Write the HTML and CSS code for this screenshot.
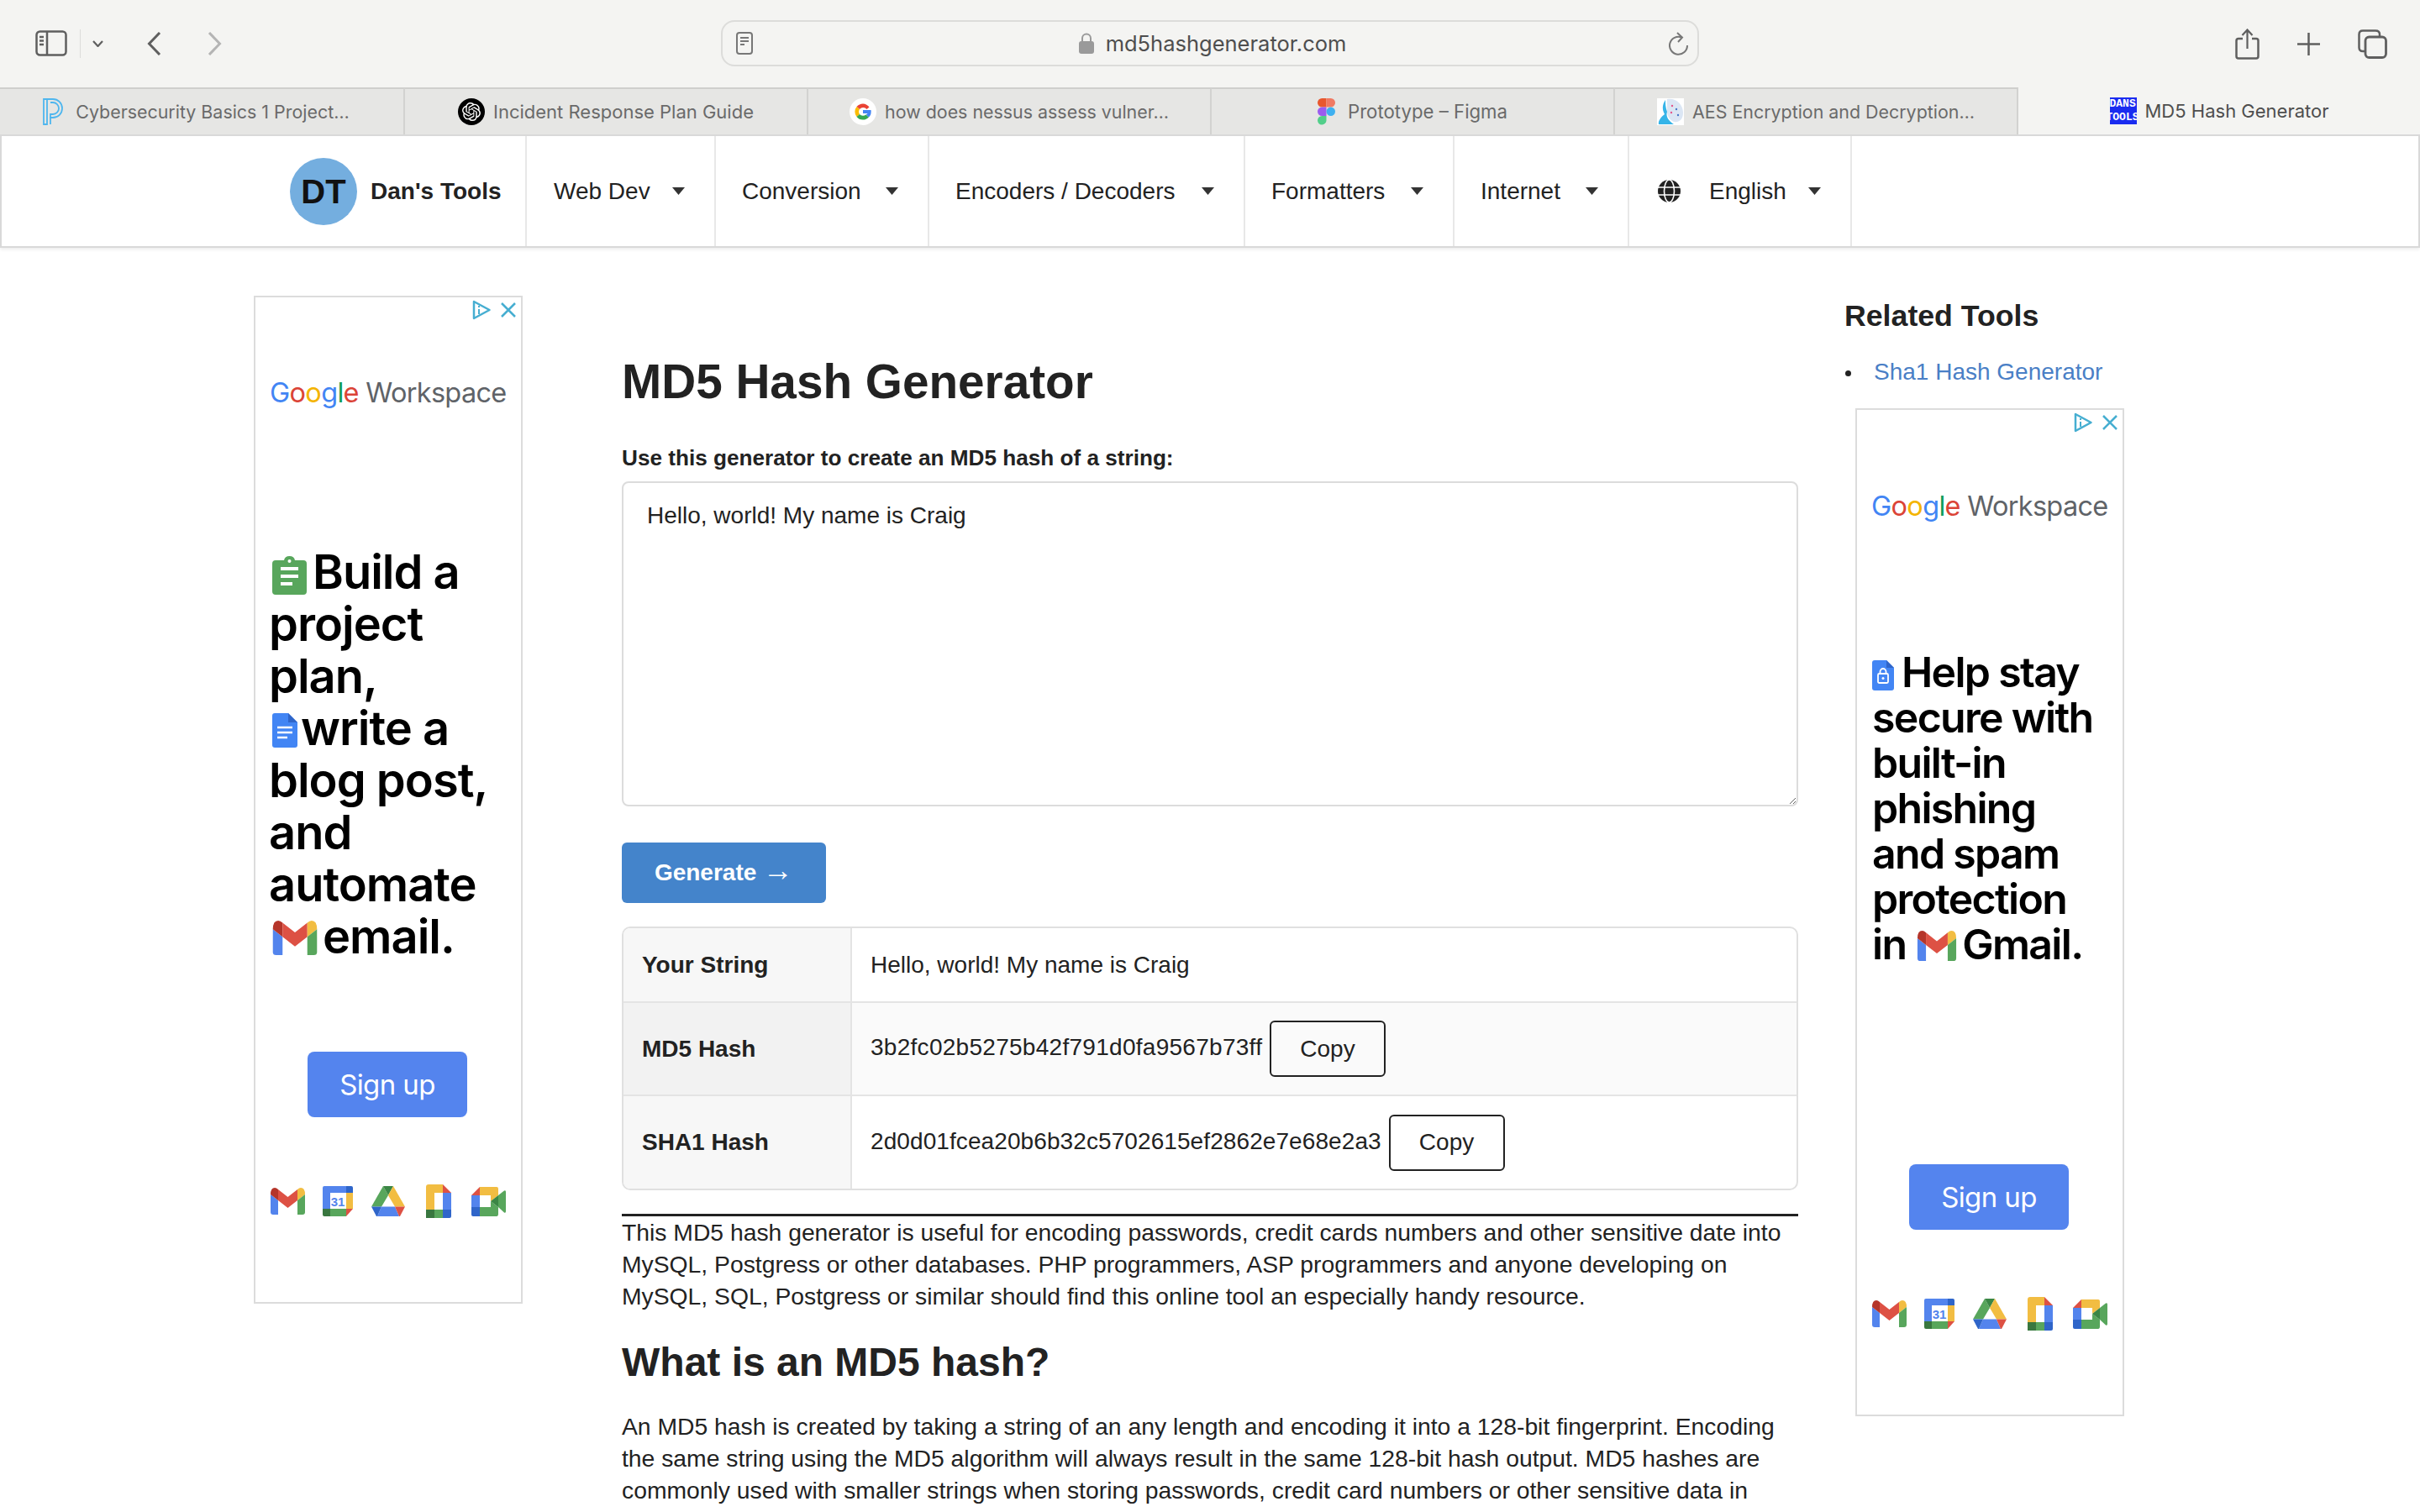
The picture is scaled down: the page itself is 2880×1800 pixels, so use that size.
FILE: index.html
```html
<!DOCTYPE html>
<html lang="en">
<head>
<meta charset="utf-8">
<title>MD5 Hash Generator</title>
<link rel="stylesheet" href="styles.css">
</head>
<body>
<svg class="defs" width="0" height="0" aria-hidden="true">
  <symbol id="i-gmail" viewBox="0 0 41 32">
    <path fill="#5384ed" d="M0 8L9 15V32H3Q0 32 0 29Z"/>
    <path fill="#b5352a" d="M0 8Q0 0 5 0Q7 0 9 2V15Z"/>
    <path fill="#dd5144" d="M9 2L20.5 11L32 2V15L20.5 24L9 15Z"/>
    <path fill="#f2bd42" d="M32 2Q34 0 36 0Q41 0 41 8L32 15Z"/>
    <path fill="#58a65c" d="M41 8V29Q41 32 38 32H32V15Z"/>
  </symbol>
  <symbol id="i-cal" viewBox="0 0 36 36">
    <path fill="#5384ed" d="M2 0H28V8H9V27H0V2Q0 0 2 0Z"/>
    <path fill="#2f65c9" d="M28 0H34Q36 0 36 2V8H28Z"/>
    <path fill="#f2bd42" d="M28 8H36V27H28Z"/>
    <path fill="#39773f" d="M0 27H9V36H2Q0 36 0 34Z"/>
    <path fill="#58a65c" d="M9 27H28V36H9Z"/>
    <path fill="#dd5144" d="M28 27H36L28 36Z"/>
    <text x="18" y="24" text-anchor="middle" class="cal-num">31</text>
  </symbol>
  <symbol id="i-drive" viewBox="0 0 40 36">
    <path fill="#58a65c" d="M14 0L20 11L12 24.500H0Z"/>
    <path fill="#3b8645" d="M14 0H26L20 11Z"/>
    <path fill="#f2bd42" d="M26 0L40 24.500H28L20 11Z"/>
    <path fill="#5384ed" d="M12 24.500H28L33 36H7Z"/>
    <path fill="#2f65c9" d="M0 24.500H12L7 36H6Z"/>
    <path fill="#dd5144" d="M28 24.500H40L34 36H33Z"/>
  </symbol>
  <symbol id="i-docs" viewBox="0 0 30 40">
    <path fill="#f2bd42" d="M3 0H20V10H10V30H0V3Q0 0 3 0Z"/>
    <path fill="#dd5144" d="M20 0L30 10H20Z"/>
    <path fill="#5384ed" d="M20 10H30V30H20Z"/>
    <path fill="#39773f" d="M0 30H10V40H0Z"/>
    <path fill="#58a65c" d="M10 30H20V40H10Z"/>
    <path fill="#2f65c9" d="M20 30H30V38Q30 40 28 40H20Z"/>
  </symbol>
  <symbol id="i-meet" viewBox="0 0 41 35">
    <path fill="#dd5144" d="M0 10L10 0V10Z"/>
    <path fill="#f2bd42" d="M10 0H30Q32 0 32 2V10L23 17V10H10Z"/>
    <path fill="#5384ed" d="M0 10H10V24H0Z"/>
    <path fill="#2f65c9" d="M0 24H10V35H2Q0 35 0 33Z"/>
    <path fill="#58a65c" d="M10 24H23V17L32 24V32Q32 35 30 35H10Z"/>
    <path fill="#3b8645" d="M23 17L32 10V24Z"/>
    <path fill="#58a65c" d="M32 10L39 4.500Q41 3.500 41 6V29Q41 31.500 39 30.500L32 24Z"/>
  </symbol>
  <symbol id="i-adinfo" viewBox="0 0 22 24">
    <path fill="none" stroke="#46aed1" stroke-width="2.500" stroke-linejoin="round" d="M2 2L20.500 12L2 22Z"/>
    <path fill="none" stroke="#46aed1" stroke-width="2" d="M8 11V17M8 7V9"/>
  </symbol>
  <symbol id="i-adclose" viewBox="0 0 18 18">
    <path fill="none" stroke="#46aed1" stroke-width="2.500" d="M1 1L17 17M17 1L1 17"/>
  </symbol>
  <symbol id="i-caret" viewBox="0 0 15 9">
    <path fill="#333" d="M0 0H15L7.500 9Z"/>
  </symbol>
  <symbol id="i-doc-blue" viewBox="0 0 30 41">
    <path fill="#4285f4" d="M3 0H19L30 11V38Q30 41 27 41H3Q0 41 0 38V3Q0 0 3 0Z"/>
    <path fill="#2f65c9" d="M19 0L30 11H19Z"/>
    <path stroke="#fff" stroke-width="2.400" d="M6 17H24M6 23H24M6 29H18"/>
  </symbol>
</svg>

<header class="browser">
  <div class="toolbar">
    <div class="tb-left">
      <svg class="ic-sidebar" width="38" height="31" viewBox="0 0 38 31"><rect x="1.500" y="1.500" width="35" height="28" rx="4" fill="none" stroke="#5f5f5f" stroke-width="2.500"/><path d="M14 1.500V29.500" stroke="#5f5f5f" stroke-width="2.500"/><path d="M5 8H10M5 12.500H10M5 17H10" stroke="#5f5f5f" stroke-width="2.500"/></svg>
      <span class="tb-divider"></span>
      <svg class="ic-chev" width="13" height="8" viewBox="0 0 13 8"><path d="M1 1L6.500 7L12 1" fill="none" stroke="#5f5f5f" stroke-width="2.200"/></svg>
      <svg class="ic-back" width="17" height="28" viewBox="0 0 17 28"><path d="M15 1L2.500 14L15 27" fill="none" stroke="#5f5f5f" stroke-width="3"/></svg>
      <svg class="ic-fwd" width="17" height="28" viewBox="0 0 17 28"><path d="M2 1L14.500 14L2 27" fill="none" stroke="#b4b4b4" stroke-width="3"/></svg>
    </div>
    <div class="address">
      <svg class="ic-page" width="20" height="27" viewBox="0 0 20 27"><rect x="1" y="1" width="18" height="25" rx="3" fill="none" stroke="#777" stroke-width="2"/><path d="M5 7H15M5 11H15M5 15H10" stroke="#777" stroke-width="2"/></svg>
      <span class="url">
        <svg width="18" height="25" viewBox="0 0 18 25"><path d="M4 11V6.500A5 5 0 0 1 14 6.500V11" fill="none" stroke="#9a9a9a" stroke-width="2"/><rect y="10" width="18" height="15" rx="3" fill="#9a9a9a"/></svg>
        <span class="url-text">md5hashgenerator.com</span>
      </span>
      <svg class="ic-reload" width="24" height="28" viewBox="0 0 24 28"><path d="M15.500 6.500A10.500 10.500 0 1 0 22 16" fill="none" stroke="#777" stroke-width="2"/><path d="M10 1L16 6.500L11 12" fill="none" stroke="#777" stroke-width="2"/></svg>
    </div>
    <div class="tb-right">
      <svg width="29" height="37" viewBox="0 0 29 37"><path d="M9 12H4Q1.500 12 1.500 14.500V33Q1.500 35.500 4 35.500H25Q27.500 35.500 27.500 33V14.500Q27.500 12 25 12H20" fill="none" stroke="#5f5f5f" stroke-width="2.500"/><path d="M14.500 24V2M8.500 8L14.500 1.500L20.500 8" fill="none" stroke="#5f5f5f" stroke-width="2.200"/></svg>
      <svg width="27" height="27" viewBox="0 0 27 27"><path d="M13.500 0V27M0 13.500H27" stroke="#5f5f5f" stroke-width="2.500"/></svg>
      <svg width="35" height="35" viewBox="0 0 35 35"><rect x="9" y="9" width="24.500" height="24.500" rx="4.500" fill="none" stroke="#5f5f5f" stroke-width="2.800"/><path d="M9 26H6Q1.500 26 1.500 21.500V6Q1.500 1.500 6 1.500H21Q26 1.500 26 6V9" fill="none" stroke="#5f5f5f" stroke-width="2.500"/></svg>
    </div>
  </div>
  <div class="tabs">
    <div class="tab tab-first tab-ell">
      <svg width="27" height="32" viewBox="0 0 27 32"><path d="M1 1V31H5V1ZM5 1H12A11 11 0 0 1 12 23H8M9 5H12A7 7 0 0 1 12 19H9V31" fill="none" stroke="#4fb6ee" stroke-width="1.800"/></svg>
      <span>Cybersecurity Basics 1 Project…</span>
    </div>
    <div class="tab">
      <svg width="32" height="32" viewBox="0 0 32 32"><circle cx="16" cy="16" r="16" fill="#000"/><g transform="translate(5 5) scale(0.9167)"><path fill="#fff" d="M22.2819 9.8211a5.9847 5.9847 0 0 0-.5157-4.9108 6.0462 6.0462 0 0 0-6.5098-2.9A6.0651 6.0651 0 0 0 4.9807 4.1818a5.9847 5.9847 0 0 0-3.9977 2.9 6.0462 6.0462 0 0 0 .7427 7.0966 5.98 5.98 0 0 0 .511 4.9107 6.051 6.051 0 0 0 6.5146 2.9001A5.9847 5.9847 0 0 0 13.2599 24a6.0557 6.0557 0 0 0 5.7718-4.2058 5.9894 5.9894 0 0 0 3.9977-2.9001 6.0557 6.0557 0 0 0-.7475-7.0729zm-9.022 12.6081a4.4755 4.4755 0 0 1-2.8764-1.0408l.1419-.0804 4.7783-2.7582a.7948.7948 0 0 0 .3927-.6813v-6.7369l2.02 1.1686a.071.071 0 0 1 .038.052v5.5826a4.504 4.504 0 0 1-4.4945 4.4944zm-9.6607-4.1254a4.4708 4.4708 0 0 1-.5346-3.0137l.142.0852 4.783 2.7582a.7712.7712 0 0 0 .7806 0l5.8428-3.3685v2.3324a.0804.0804 0 0 1-.0332.0615L9.74 19.9502a4.4992 4.4992 0 0 1-6.1408-1.6464zM2.3408 7.8956a4.485 4.485 0 0 1 2.3655-1.9728V11.6a.7664.7664 0 0 0 .3879.6765l5.8144 3.3543-2.0201 1.1685a.0757.0757 0 0 1-.071 0l-4.8303-2.7865A4.504 4.504 0 0 1 2.3408 7.872zm16.5963 3.8558L13.1038 8.364 15.1192 7.2a.0757.0757 0 0 1 .071 0l4.8303 2.7913a4.4944 4.4944 0 0 1-.6765 8.1042v-5.6772a.79.79 0 0 0-.407-.667zm2.0107-3.0231l-.142-.0852-4.7735-2.7818a.7759.7759 0 0 0-.7854 0L9.409 9.2297V6.8974a.0662.0662 0 0 1 .0284-.0615l4.8303-2.7866a4.4992 4.4992 0 0 1 6.6802 4.66zM8.3065 12.863l-2.02-1.1638a.0804.0804 0 0 1-.038-.0567V6.0742a4.4992 4.4992 0 0 1 7.3757-3.4537l-.142.0805L8.704 5.459a.7948.7948 0 0 0-.3927.6813zm1.0976-2.3654l2.602-1.4998 2.6069 1.4998v2.9994l-2.5974 1.4997-2.6067-1.4997Z"/></g></svg>
      <span>Incident Response Plan Guide</span>
    </div>
    <div class="tab tab-ell">
      <svg width="32" height="32" viewBox="0 0 32 32"><circle cx="16" cy="16" r="16" fill="#fff"/><path d="M23.500 10.500A9.500 9.500 0 0 0 8.500 10L12 13A5.500 5.500 0 0 1 20.500 13Z" fill="#ea4335"/><path d="M8.500 10A9.500 9.500 0 0 0 8.500 22L12 19A5.500 5.500 0 0 1 12 13Z" fill="#fbbc05"/><path d="M8.500 22A9.500 9.500 0 0 0 23 22.500L19.500 19.500A5.500 5.500 0 0 1 12 19Z" fill="#34a853"/><path d="M25.500 14H16V18H21.500A5 5 0 0 1 19.500 19.500L23 22.500A9.500 9.500 0 0 0 25.500 14Z" fill="#4285f4"/></svg>
      <span>how does nessus assess vulner…</span>
    </div>
    <div class="tab tab-figma">
      <svg width="21" height="32" viewBox="0 0 21 32"><path d="M5.250 0H10.500V10.500H5.250A5.250 5.250 0 0 1 5.250 0Z" fill="#e8572e"/><path d="M10.500 0H15.750A5.250 5.250 0 0 1 15.750 10.500H10.500Z" fill="#f07a63"/><path d="M5.250 10.500H10.500V21H5.250A5.250 5.250 0 0 1 5.250 10.500Z" fill="#9b5cf0"/><circle cx="15.750" cy="15.750" r="5.250" fill="#3eb0f0"/><path d="M5.250 21H10.500V26.500A5.250 5.250 0 1 1 5.250 21Z" fill="#52cf8a"/></svg>
      <span>Prototype – Figma</span>
    </div>
    <div class="tab tab-ell">
      <svg width="32" height="32" viewBox="0 0 32 32"><rect width="32" height="32" fill="#fff"/><path d="M12 1C22 -1 31 7 31 17C31 24 28 27 24 28C17 30 11 21 12 14Z" fill="#dbe6f4"/><path d="M10 2C6 8 6 13 9 19C5 22 1 27 2 31H20C14 27 10 22 12 16C10 11 10 6 10 2Z" fill="#35b4e8"/><circle cx="18" cy="9" r="1.200" fill="#e6558c"/><circle cx="23" cy="13" r="1.200" fill="#4a78c8"/><circle cx="17" cy="17" r="1.200" fill="#e6558c"/><circle cx="25" cy="20" r="1.200" fill="#4a78c8"/></svg>
      <span>AES Encryption and Decryption…</span>
    </div>
    <div class="tab tab-active">
      <span class="dt-fav"><span class="dt-a">DANS</span><span class="dt-b">TOOLS</span></span>
      <span>MD5 Hash Generator</span>
    </div>
  </div>
</header>

<nav class="nav">
  <a class="nav-brand"><span class="brand-circle">DT</span><span class="brand-name">Dan's Tools</span></a>
  <a class="nav-item ni-web">Web Dev<svg class="caret"><use href="#i-caret"/></svg></a>
  <a class="nav-item ni-conv">Conversion<svg class="caret"><use href="#i-caret"/></svg></a>
  <a class="nav-item ni-enc">Encoders / Decoders<svg class="caret"><use href="#i-caret"/></svg></a>
  <a class="nav-item ni-form">Formatters<svg class="caret"><use href="#i-caret"/></svg></a>
  <a class="nav-item ni-net">Internet<svg class="caret"><use href="#i-caret"/></svg></a>
  <a class="nav-item ni-lang">
    <svg class="globe" width="27" height="27" viewBox="0 0 27 27"><circle cx="13.500" cy="13.500" r="13.500" fill="#222"/><ellipse cx="13.500" cy="13.500" rx="6" ry="13.500" fill="none" stroke="#fff" stroke-width="1.600"/><path d="M0 9H27M0 18H27" stroke="#fff" stroke-width="1.600"/></svg>
    English<svg class="caret"><use href="#i-caret"/></svg>
  </a>
</nav>

<div class="layout">
  <aside class="ad ad-left">
    <div class="ad-marks"><svg class="mark-info"><use href="#i-adinfo"/></svg><svg class="mark-close"><use href="#i-adclose"/></svg></div>
    <div class="wordmark wm-left"><span class="g-b">G</span><span class="g-r">o</span><span class="g-y">o</span><span class="g-b">g</span><span class="g-g">l</span><span class="g-r">e</span> <span class="g-w">Workspace</span></div>
    <p class="ad-head head-left">
      <svg class="in-clip" width="41" height="46" viewBox="0 0 41 46"><path fill="#58a65c" d="M4 5H14Q15 0 20.500 0Q26 0 27 5H37Q41 5 41 9V42Q41 46 37 46H4Q0 46 0 42V9Q0 5 4 5Z"/><circle cx="20.500" cy="6" r="2" fill="#fff"/><path d="M10 15H31M10 24H31M10 33H24" stroke="#fff" stroke-width="4"/></svg>Build a<br>project<br>plan,<br><svg class="in-doc"><use href="#i-doc-blue"/></svg>write a<br>blog post,<br>and<br>automate<br><svg class="in-gmail"><use href="#i-gmail"/></svg>email.
    </p>
    <div class="signup su-left">Sign up</div>
    <div class="ad-icons">
      <svg class="ai-gmail"><use href="#i-gmail"/></svg>
      <svg class="ai-cal"><use href="#i-cal"/></svg>
      <svg class="ai-drive"><use href="#i-drive"/></svg>
      <svg class="ai-docs"><use href="#i-docs"/></svg>
      <svg class="ai-meet"><use href="#i-meet"/></svg>
    </div>
  </aside>

  <main class="main">
    <h1 class="title">MD5 Hash Generator</h1>
    <label class="field-label" for="src">Use this generator to create an MD5 hash of a string:</label>
    <textarea class="field" id="src" readonly>Hello, world! My name is Craig</textarea>
    <button class="generate" type="button">Generate <span class="arrow">→</span></button>
    <div class="result">
      <table class="result-table">
        <tr><th>Your String</th><td>Hello, world! My name is Craig</td></tr>
        <tr class="row-alt"><th>MD5 Hash</th><td><span class="hash-md5">3b2fc02b5275b42f791d0fa9567b73ff</span> <button class="copy" type="button">Copy</button></td></tr>
        <tr><th>SHA1 Hash</th><td><span class="hash-sha">2d0d01fcea20b6b32c5702615ef2862e7e68e2a3</span> <button class="copy" type="button">Copy</button></td></tr>
      </table>
    </div>
    <hr class="rule">
    <p class="copytext">This MD5 hash generator is useful for encoding passwords, credit cards numbers and other sensitive date into MySQL, Postgress or other databases. PHP programmers, ASP programmers and anyone developing on MySQL, SQL, Postgress or similar should find this online tool an especially handy resource.</p>
    <h2 class="subtitle">What is an MD5 hash?</h2>
    <p class="copytext">An MD5 hash is created by taking a string of an any length and encoding it into a 128-bit fingerprint. Encoding the same string using the MD5 algorithm will always result in the same 128-bit hash output. MD5 hashes are commonly used with smaller strings when storing passwords, credit card numbers or other sensitive data in</p>
  </main>

  <aside class="side">
    <h3 class="side-title">Related Tools</h3>
    <ul class="side-list"><li><a class="side-link">Sha1 Hash Generator</a></li></ul>
    <div class="ad ad-right">
      <div class="ad-marks"><svg class="mark-info"><use href="#i-adinfo"/></svg><svg class="mark-close"><use href="#i-adclose"/></svg></div>
      <div class="wordmark wm-right"><span class="g-b">G</span><span class="g-r">o</span><span class="g-y">o</span><span class="g-b">g</span><span class="g-g">l</span><span class="g-r">e</span> <span class="g-w">Workspace</span></div>
      <p class="ad-head head-right">
        <svg class="in-lock" width="26" height="36" viewBox="0 0 26 36"><path fill="#4285f4" d="M3 0H17L26 9V33Q26 36 23 36H3Q0 36 0 33V3Q0 0 3 0Z"/><path fill="#2f65c9" d="M17 0L26 9H17Z"/><rect x="7" y="16" width="12" height="11" rx="1.500" fill="none" stroke="#fff" stroke-width="1.800"/><path d="M9.500 16V13.500A3.500 3.500 0 0 1 16.500 13.500V16" fill="none" stroke="#fff" stroke-width="1.800"/><circle cx="13" cy="21.500" r="1.500" fill="#fff"/></svg>Help stay<br>secure with<br>built-in<br>phishing<br>and spam<br>protection<br>in<svg class="in-gmail-sm"><use href="#i-gmail"/></svg>Gmail.
      </p>
      <div class="signup su-right">Sign up</div>
      <div class="ad-icons">
        <svg class="ai-gmail"><use href="#i-gmail"/></svg>
        <svg class="ai-cal"><use href="#i-cal"/></svg>
        <svg class="ai-drive"><use href="#i-drive"/></svg>
        <svg class="ai-docs"><use href="#i-docs"/></svg>
        <svg class="ai-meet"><use href="#i-meet"/></svg>
      </div>
    </div>
  </aside>
</div>
</body>
</html>
```

FILE: styles.css
```css
* { box-sizing: border-box; }
html, body { margin: 0; padding: 0; }
body {
  width: 2880px;
  height: 1800px;
  overflow: hidden;
  background: #fff;
  color: #222;
  font-family: "Liberation Sans", Arial, sans-serif;
  font-size: 28px;
  line-height: 38px;
}
.defs { position: absolute; }

/* Browser chrome */
.browser { font-family: Inter, "Noto Sans", sans-serif; background: #f4f4f2; }
.toolbar { height: 104px; display: grid; grid-template-columns: 858px 1164px 1fr; align-items: start; padding-top: 24px; }
.tb-left { display: flex; align-items: center; height: 55px; padding-left: 42px; }
.tb-divider { width: 1px; height: 34px; background: #dcdcda; margin-left: 15px; }
.ic-chev { margin-left: 14px; }
.ic-back { margin-left: 52px; }
.ic-fwd { margin-left: 55px; }
.address {
  height: 55px;
  border: 2px solid #dcdcda;
  border-radius: 16px;
  display: flex;
  align-items: center;
  justify-content: space-between;
  padding: 0 10px 0 16px;
}
.url { display: flex; align-items: center; gap: 14px; margin-left: 4px; }
.url-text { font-size: 25.500px; line-height: 32px; color: #4e4e4e; }
.tb-right { display: flex; align-items: center; justify-content: flex-end; gap: 45px; height: 48px; padding-right: 39px; margin-top: 4px; }

.tabs { height: 56px; display: flex; }
.tab {
  width: 480px;
  height: 56px;
  display: flex;
  align-items: center;
  justify-content: center;
  gap: 10px;
  background: #e6e6e4;
  border-top: 2px solid #cfcfcd;
  border-right: 2px solid #d2d2d0;
  font-size: 22px;
  color: #6a6a6a;
  white-space: nowrap;
}
.tab-ell { font-size: 21.400px; }
.tab-first { width: 482px; padding-right: 13px; gap: 12px; }
.tab-figma { gap: 15px; font-size: 22.200px; }
.tab-active { flex: 1; width: auto; background: #f4f4f2; border: 0; color: #4e4e4e; }
.dt-fav {
  width: 32px;
  height: 32px;
  flex: none;
  background: #1a2cf0;
  color: #fff;
  font-family: "Liberation Mono", monospace;
  font-size: 13px;
  line-height: 16px;
  font-weight: 700;
  overflow: hidden;
  white-space: nowrap;
}
.dt-a, .dt-b { display: block; }
.dt-b { margin-left: -4px; }

/* Site nav */
.nav {
  height: 135px;
  display: flex;
  background: #fff;
  border: 2px solid #d9d9d9;
  padding-left: 343px;
  box-shadow: 0 2px 4px rgba(0, 0, 0, 0.08);
}
.nav-brand { display: flex; align-items: center; gap: 16px; width: 282px; border-right: 2px solid #e8e8e8; }
.brand-circle {
  width: 80px;
  height: 80px;
  border-radius: 50%;
  background: #74aedf;
  display: flex;
  align-items: center;
  justify-content: center;
  font-size: 40px;
  font-weight: 700;
  color: #111;
}
.brand-name { font-weight: 700; font-size: 28px; color: #222; }
.nav-item {
  display: flex;
  align-items: center;
  padding: 0 35px 0 31px;
  border-right: 2px solid #e8e8e8;
  white-space: nowrap;
}
.ni-web { width: 225px; padding-left: 32px; }
.ni-conv { width: 254px; padding-left: 31px; }
.ni-enc { width: 376px; }
.ni-form { width: 249px; }
.ni-net { width: 208px; }
.ni-lang { width: 265px; padding-left: 34px; }
.caret { width: 15px; height: 9px; margin-left: auto; flex: none; }
.globe { margin-right: 34px; flex: none; }

/* Page layout */
.layout {
  display: grid;
  grid-template-columns: 320px 1400px 331px;
  column-gap: 118px;
  padding: 57px 0 0 302px;
}
.main { min-width: 0; }
.title { font-size: 56.700px; line-height: 70px; font-weight: 700; margin: 68px 0 0; color: #222; }
.field-label { display: block; font-size: 26.150px; line-height: 36px; font-weight: 700; margin-top: 37px; }
.field {
  display: block;
  width: 1400px;
  height: 387px;
  margin-top: 10px;
  padding: 20px 28px;
  border: 2px solid #dcdcdc;
  border-radius: 8px;
  font: 28px/38px "Liberation Sans", Arial, sans-serif;
  color: #222;
  background: #fff;
  outline: none;
}
.generate {
  display: block;
  width: 243px;
  height: 72px;
  margin-top: 43px;
  border: 0;
  border-radius: 6px;
  background: #4484cb;
  color: #fff;
  font: 700 28px/38px "Liberation Sans", Arial, sans-serif;
  padding: 0;
}
.arrow { font-size: 36px; font-weight: 400; line-height: 30px; }
.result { margin-top: 28px; border: 2px solid #e0e0e0; border-radius: 10px; overflow: hidden; }
.result-table { width: 100%; border-collapse: collapse; }
.result-table th {
  width: 271px;
  padding: 0 22px;
  text-align: left;
  background: #f7f7f7;
  font-weight: 700;
  border-right: 2px solid #e4e4e4;
}
.result-table td { padding: 0 22px; }
.result-table tr { height: 111px; border-top: 2px solid #e4e4e4; }
.result-table tr:first-child { height: 88px; border-top: 0; }
.row-alt th { background: #f2f2f2; }
.row-alt td { background: #fafafa; }
.hash-md5 { letter-spacing: 0.280px; }
.hash-sha { letter-spacing: 0.090px; }
.copy {
  width: 138px;
  height: 67px;
  margin-left: 1px;
  border: 2px solid #222;
  border-radius: 6px;
  background: #fff;
  color: #222;
  font: 28px/38px "Liberation Sans", Arial, sans-serif;
  padding: 0;
  vertical-align: middle;
}
.row-alt .copy { background: #fafafa; }
.rule { height: 3px; margin: 28px 0 0; border: 0; background: #222; }
.copytext { margin: 0; font-size: 28.300px; }
.subtitle { font-size: 48px; line-height: 60px; font-weight: 700; margin: 30px 0 0; color: #222; }
.subtitle + .copytext { margin-top: 27px; }

/* Sidebar */
.side { min-width: 0; margin-left: -63px; }
.side-title { font-size: 35.700px; line-height: 46px; font-weight: 700; margin: 1px 0 0; color: #222; }
.side-list { list-style: none; margin: 25px 0 0; padding: 0 0 0 35px; position: relative; }
.side-list li::before { content: ""; position: absolute; left: 1px; top: 17px; width: 7px; height: 7px; border-radius: 50%; background: #222; }
.side-link { color: #4a7fc6; }

/* Ads */
.ad {
  position: relative;
  width: 320px;
  height: 1200px;
  border: 2px solid #dcdcdc;
  padding-left: 16px;
  background: #fff;
  color: #000;
  overflow: hidden;
  font-family: Inter, "Noto Sans", sans-serif;
}
.ad-right { margin: 24px 0 0 13px; }
.ad-marks { position: absolute; top: 3px; right: 6px; display: flex; gap: 12px; align-items: center; }
.mark-info { width: 22px; height: 24px; }
.mark-close { width: 18px; height: 18px; }
.wordmark { font-size: 32.500px; line-height: 50px; letter-spacing: -0.7px; white-space: nowrap; font-family: Inter, sans-serif; }
.wm-left { margin-top: 89px; padding-left: 1px; }
.wm-right { margin-top: 90px; padding-left: 1px; }
.g-b { color: #4285f4; }
.g-r { color: #db4437; }
.g-y { color: #f4b400; }
.g-g { color: #0f9d58; }
.g-w { color: #5f6368; }
.ad-head { margin: 0; font-weight: 600; white-space: nowrap; }
.head-left { margin-top: 157px; font-size: 56px; line-height: 62px; letter-spacing: -1px; }
.head-right { margin-top: 145px; padding-left: 2px; font-size: 50px; line-height: 54px; letter-spacing: -1.700px; }
.in-clip { vertical-align: -7px; margin: 0 7px 0 4px; }
.in-doc { width: 30px; height: 41px; vertical-align: -3px; margin: 0 4px 0 4px; }
.in-gmail { width: 54px; height: 41px; vertical-align: -2px; margin: 0 6px 0 4px; }
.in-lock { vertical-align: -4px; margin-right: 9px; }
.in-gmail-sm { width: 50px; height: 36px; vertical-align: -2px; margin: 0 5px 0 12px; }
.signup {
  width: 190px;
  height: 78px;
  display: flex;
  align-items: center;
  justify-content: center;
  border-radius: 8px;
  background: #5484ee;
  color: #fff;
  font-size: 33px;
  letter-spacing: -0.600px;
}
.su-left { margin: 106px 0 0 46px; }
.su-right { margin: 235px 0 0 46px; }
.ad-icons { display: flex; align-items: center; width: 280px; height: 40px; margin: 80px 0 0 2px; }
.ai-gmail { width: 41px; height: 32px; }
.ai-cal { width: 36px; height: 36px; margin-left: 21px; }
.ai-drive { width: 40px; height: 36px; margin-left: 22px; }
.ai-docs { width: 30px; height: 40px; margin-left: 25px; }
.ai-meet { width: 41px; height: 35px; margin-left: 24px; }
.cal-num { font: 700 15px "Liberation Sans", sans-serif; fill: #5384ed; }
```
